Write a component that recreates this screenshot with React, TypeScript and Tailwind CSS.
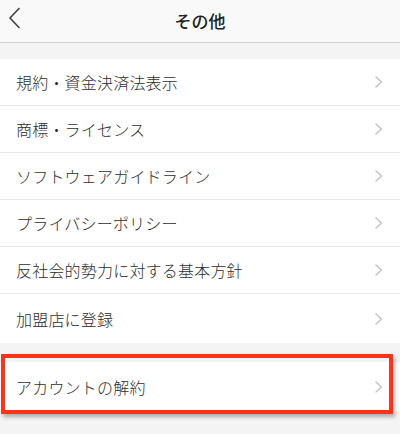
import React from "react";

const items = [
  "規約・資金決済法表示",
  "商標・ライセンス",
  "ソフトウェアガイドライン",
  "プライバシーポリシー",
  "反社会的勢力に対する基本方針",
  "加盟店に登録",
];

const Chevron = () => (
  <svg width="10" height="14" viewBox="0 0 10 14" fill="none" className="mr-[16px]">
    <path d="M2 2l5.5 5L2 12" stroke="#c3c3c6" strokeWidth="1.5" strokeLinecap="round" strokeLinejoin="round" />
  </svg>
);

const Row = ({ label, last }: { label: string; last?: boolean }) => (
  <div className={`pl-[16px] ${last ? "" : "border-b border-[#e9e9e9]"}`}>
    <div className={`flex items-center justify-between ${last ? "h-[49px]" : "h-[46px]"}`}>
      <span className="text-[16px] font-light text-[#2e2e2e] tracking-[0.2px]">{label}</span>
      <Chevron />
    </div>
  </div>
);

export default function App() {
  return (
    <div
      className="w-[400px] h-[434px] bg-[#f4f4f4] overflow-hidden"
      style={{ fontFamily: '"Noto Sans CJK JP", "Noto Sans", sans-serif' }}
    >
      <header className="relative h-[43px] bg-[#f9f9f9] border-b border-[#d2d2d2] flex items-center justify-center">
        <button className="absolute left-[7px] top-[6px] p-0">
          <svg width="14" height="24" viewBox="0 0 14 24" fill="none">
            <path d="M12 2.5L3 12l9 9.5" stroke="#454545" strokeWidth="1.7" strokeLinecap="round" strokeLinejoin="round" />
          </svg>
        </button>
        <h1 className="text-[17px] font-medium text-[#222]">その他</h1>
      </header>

      <div className="mt-[16px] bg-white">
        {items.map((t, i) => (
          <Row key={t} label={t} last={i === items.length - 1} />
        ))}
      </div>

      <div className="relative mt-[19px] bg-white">
        <Row label="アカウントの解約" last />
        <div className="absolute left-[1px] right-[7px] -top-[8px] -bottom-[3px] border-[4px] border-[#ff3319] shadow-[2px_3px_4px_rgba(0,0,0,0.3)]" />
      </div>
    </div>
  );
}
